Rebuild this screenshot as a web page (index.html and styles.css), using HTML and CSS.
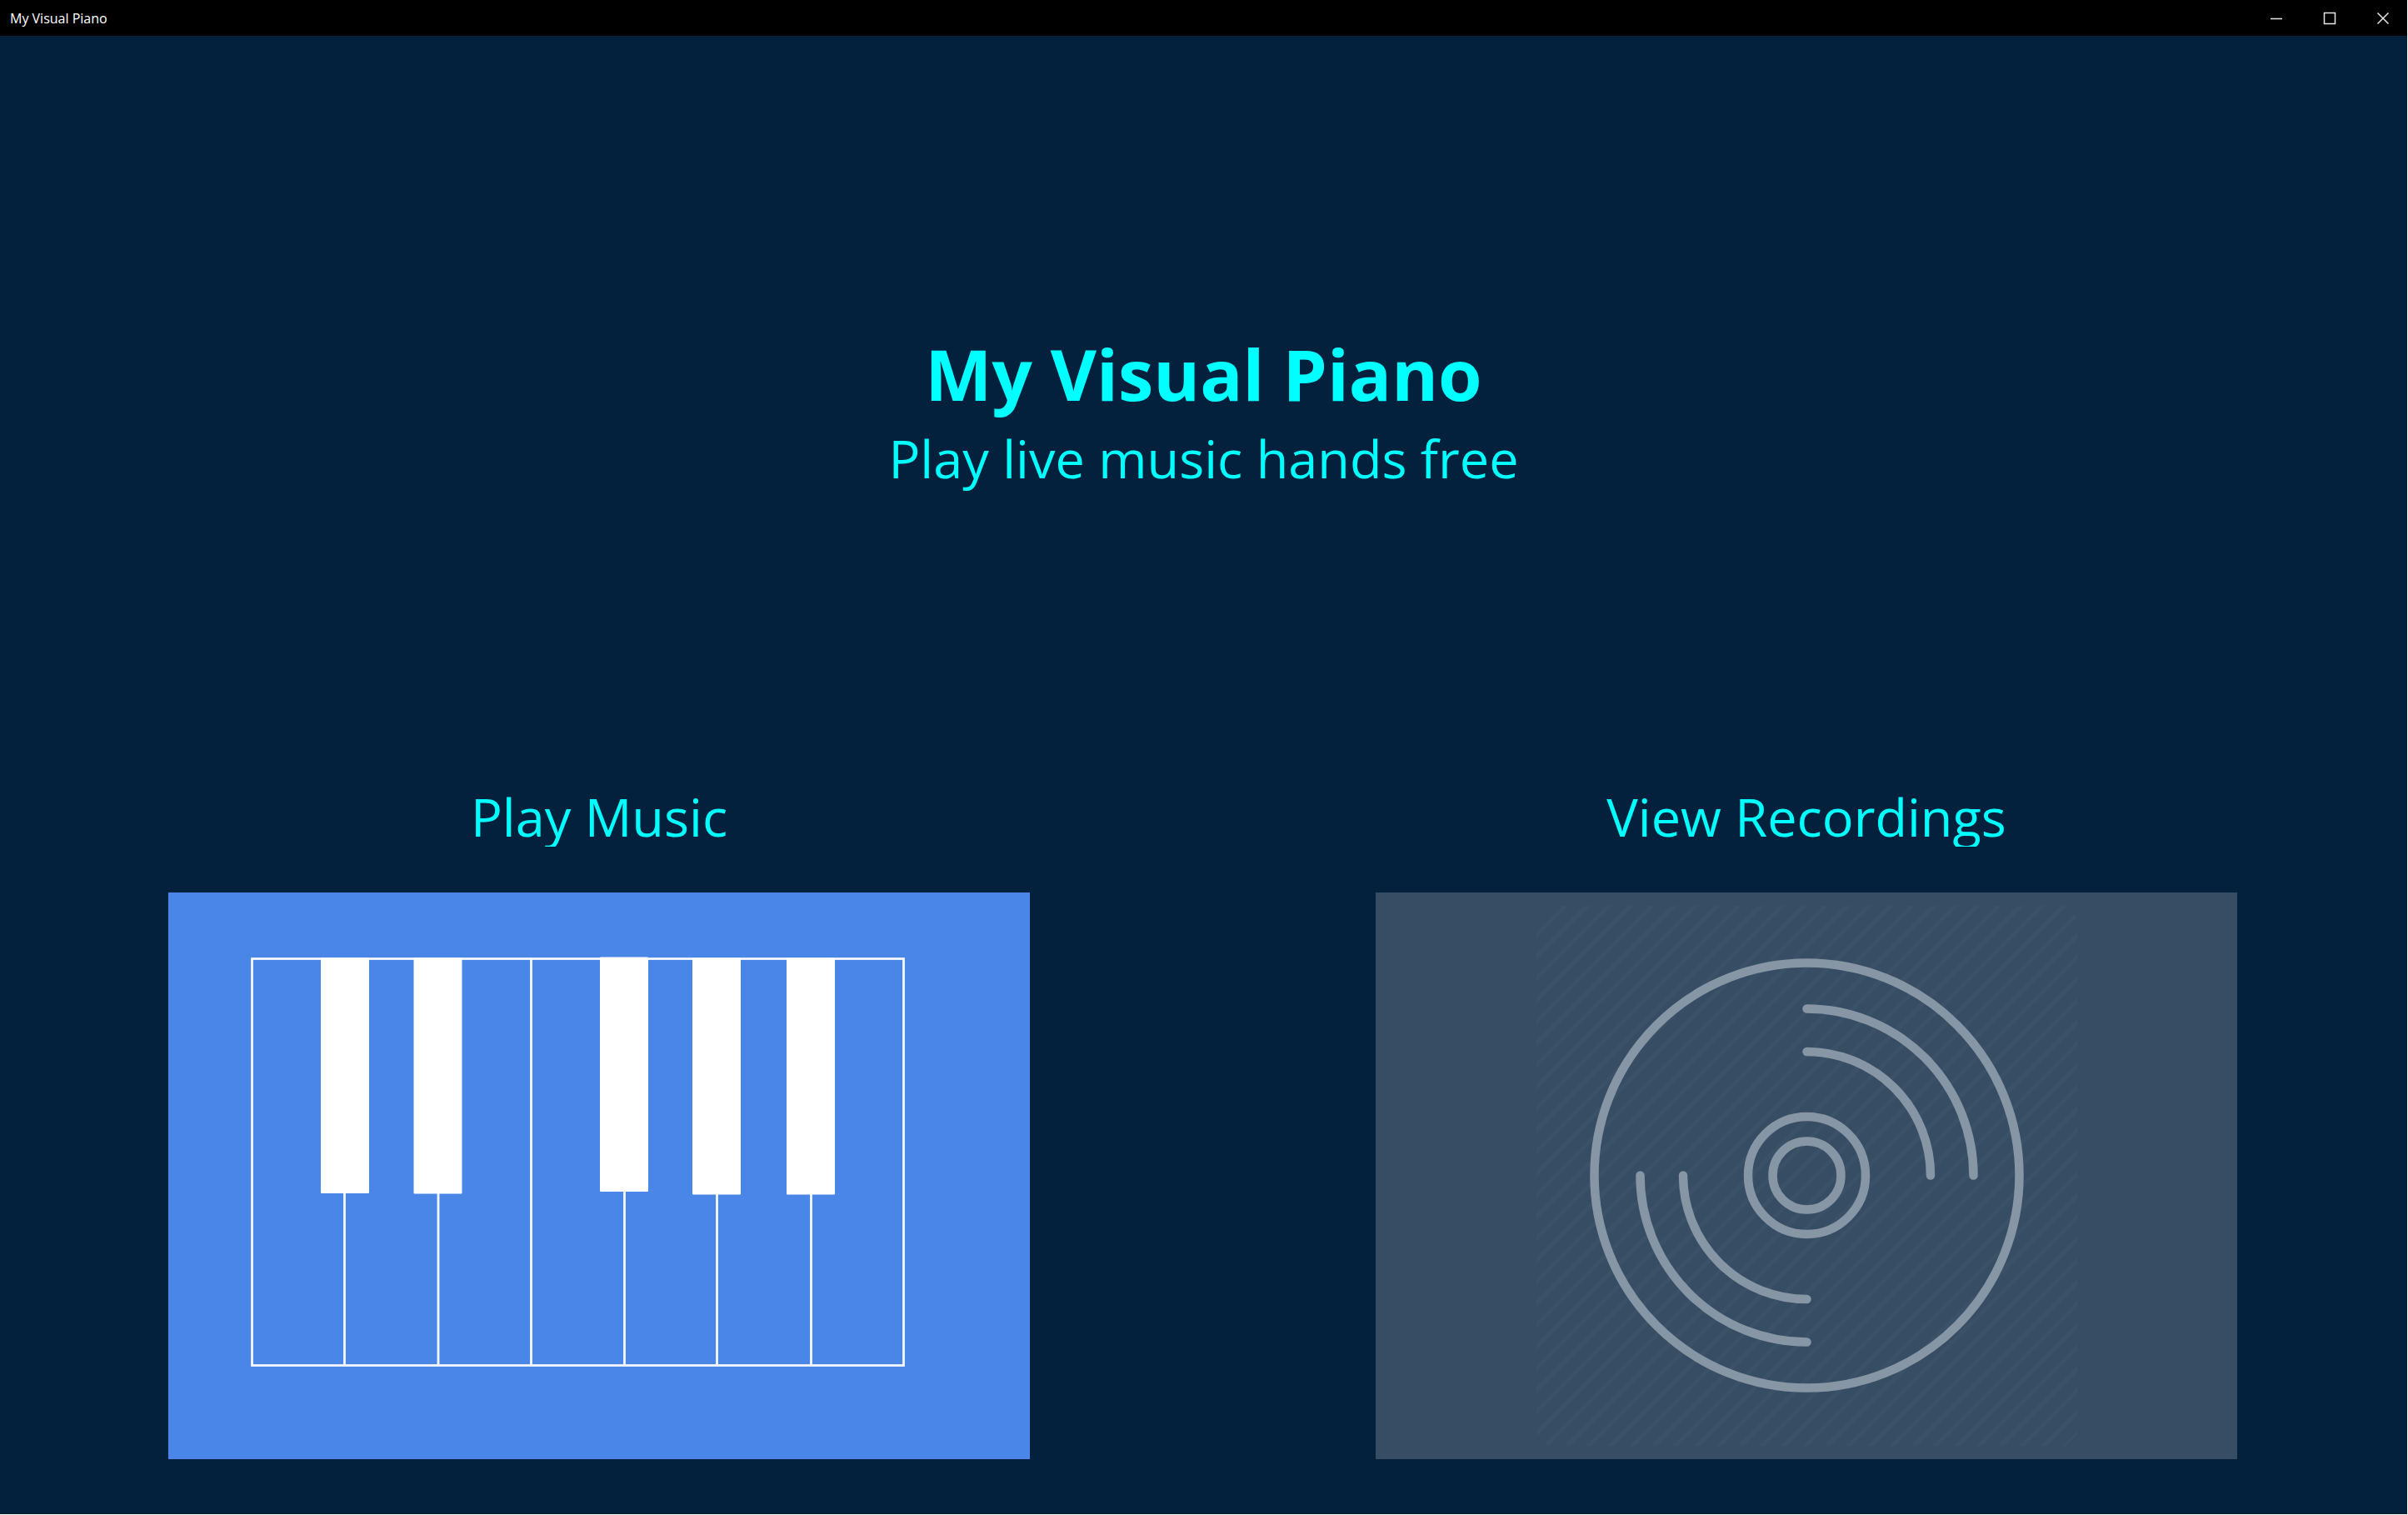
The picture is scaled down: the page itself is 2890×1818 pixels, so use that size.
FILE: index.html
```html
<!DOCTYPE html>
<html lang="en">
<head>
<meta charset="utf-8">
<title>My Visual Piano</title>
<link rel="stylesheet" href="styles.css">
</head>
<body>
<header class="titlebar">
  <span class="titlebar-name">My Visual Piano</span>
  <div class="window-controls">
    <button type="button" class="window-button" aria-label="Minimize"><svg width="16" height="16" viewBox="0 0 16 16"><path d="M1 8.5H15"/></svg></button>
    <button type="button" class="window-button" aria-label="Maximize"><svg width="16" height="16" viewBox="0 0 16 16"><path d="M1.500 1.500H14.500V14.500H1.500Z"/></svg></button>
    <button type="button" class="window-button" aria-label="Close"><svg width="16" height="16" viewBox="0 0 16 16"><path d="M1.500 1.500L14.500 14.500M14.500 1.500L1.500 14.500"/></svg></button>
  </div>
</header>
<main class="home">
  <section class="hero">
    <h1 class="hero-title">My Visual Piano</h1>
    <p class="hero-subtitle">Play live music hands free</p>
  </section>
  <section class="choices">
    <div class="choice">
      <h2 class="choice-title" id="play-title">Play Music</h2>
      <button type="button" class="choice-button choice-button-play" aria-labelledby="play-title">
        <svg class="artwork" viewBox="0 0 1034 680">
          <g fill="none" stroke="#f4f8fe" stroke-width="2.800">
            <rect x="100.500" y="79.500" width="782" height="488"/>
            <path d="M211.500 360V567M324 360V567M435.500 79V567M547.500 358V567M658.500 360V567M771.500 360V567"/>
          </g>
          <g fill="#fff">
            <rect x="183" y="78" width="58" height="283" rx="1"/>
            <rect x="294.500" y="78" width="58" height="283.500" rx="1"/>
            <rect x="518" y="77.500" width="58" height="281.500" rx="1"/>
            <rect x="629" y="78.500" width="58" height="284" rx="1"/>
            <rect x="742" y="78.500" width="58" height="284" rx="1"/>
          </g>
        </svg>
      </button>
    </div>
    <div class="choice">
      <h2 class="choice-title" id="recordings-title">View Recordings</h2>
      <button type="button" class="choice-button choice-button-recordings" aria-labelledby="recordings-title">
        <svg class="artwork" viewBox="0 0 1034 680">
          <defs>
            <pattern id="hatch" x="10" y="0" width="26" height="26" patternUnits="userSpaceOnUse">
              <path d="M-4 4L4 -4M-4 30L30 -4M22 30L30 22" stroke="#3a5167" stroke-width="5"/>
            </pattern>
          </defs>
          <path d="M206 16H828L842 30V650L828 664H206L193 650V30Z" fill="url(#hatch)"/>
          <g fill="none" stroke="#8796a4" stroke-width="10.500" stroke-linecap="round">
            <circle cx="517.500" cy="339.500" r="255"/>
            <circle cx="517.500" cy="339.500" r="70.500"/>
            <circle cx="517.500" cy="339.500" r="41"/>
            <path d="M517.500 139.500A200 200 0 0 1 717.500 339.500M517.500 191A148.500 148.500 0 0 1 666 339.500M517.500 539.500A200 200 0 0 1 317.500 339.500M517.500 488A148.500 148.500 0 0 1 369 339.500"/>
          </g>
        </svg>
      </button>
    </div>
  </section>
</main>
</body>
</html>
```

FILE: styles.css
```css
* {
  box-sizing: border-box;
}

body {
  display: flex;
  flex-direction: column;
  min-height: 100vh;
  margin: 0;
  border: solid #fff;
  border-width: 0 1px 1px 0;
  background: #03213d;
  color: #0ff;
  font-family: "Segoe UI", "Open Sans", "Noto Sans", sans-serif;
}

.titlebar {
  display: flex;
  align-items: center;
  justify-content: space-between;
  height: 43px;
  padding: 0 12px;
  background: #000;
  color: #fff;
}

.titlebar-name {
  font-size: 16px;
  line-height: 20px;
}

.window-controls {
  display: flex;
  gap: 30px;
}

.window-button {
  display: grid;
  place-items: center;
  width: 34px;
  height: 43px;
  padding: 0;
  border: 0;
  background: none;
}

.window-button svg {
  fill: none;
  stroke: #e6e6e6;
  stroke-width: 1.5;
}

.home {
  flex: 1;
  display: flex;
  flex-direction: column;
  justify-content: space-between;
  padding: 349px 0 66px;
}

.hero {
  text-align: center;
}

.hero-title {
  margin: 0;
  font-size: 85px;
  font-weight: 700;
  line-height: 112px;
}

.hero-subtitle {
  margin: 0;
  font-size: 63px;
  line-height: 92px;
}

.choices {
  display: grid;
  grid-template-columns: 1fr 1fr;
  gap: 415px;
  padding: 0 204px 0 202px;
}

.choice-title {
  height: 76px;
  margin: 0 0 55px;
  overflow: hidden;
  font-size: 63px;
  font-weight: 400;
  line-height: 80px;
  text-align: center;
}

.choice-button {
  display: block;
  width: 100%;
  padding: 0;
  border: 0;
}

.choice-button-play {
  background: #4a86e8;
}

.choice-button-recordings {
  background: #374d63;
}

.artwork {
  display: block;
  width: 100%;
  height: auto;
}
```
